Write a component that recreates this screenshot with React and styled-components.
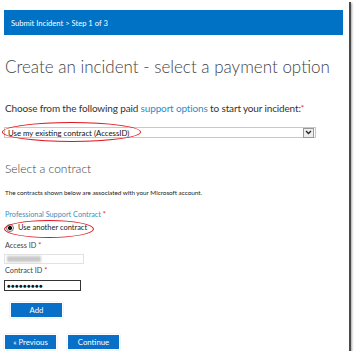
import React from 'react'
import styled, { createGlobalStyle } from 'styled-components'

const GlobalStyle = createGlobalStyle`
  html, body {
    margin: 0;
    padding: 0;
    background: #fff;
  }
  body {
    font-family: Lato, "Liberation Sans", sans-serif;
    color: #333;
  }
`

const Frame = styled.div`
  position: relative;
  width: 349px;
  height: 351px;
  box-sizing: border-box;
  background: #fff;
  box-shadow: 2px 2px 0 #4a4a4a, 3px 3px 2px rgba(0, 0, 0, 0.35);
  padding: 10px 6px 0 4px;
  overflow: hidden;
`

const Banner = styled.div`
  height: 25px;
  background: #0072c6;
  color: #fff;
  font-size: 7.6px;
  display: flex;
  align-items: center;
  padding-left: 7px;
`

const Content = styled.div`
  padding-left: 1px;
`

const Title = styled.h1`
  margin: 22px 0 0;
  font-weight: 300;
  font-size: 17px;
  line-height: 20px;
  color: #444;
  white-space: nowrap;
`

const Lead = styled.p`
  margin: 24px 0 0;
  font-size: 10px;
  letter-spacing: -0.15px;
  line-height: 14px;
  color: #333;
  white-space: nowrap;
`

const Link = styled.span`
  color: #2e8ec9;
`

const Req = styled.span`
  color: #e0262b;
  font-size: ${p => p.$small ? '7.3px' : '8px'};
  vertical-align: ${p => p.$small ? 'baseline' : 'top'};
`

const SelectBox = styled.div`
  margin: 12px 0 0 -1px;
  width: 312px;
  height: 11px;
  box-sizing: border-box;
  border: 1px solid #c8c8c8;
  display: flex;
  align-items: center;
  justify-content: space-between;
  font-size: 7.8px;
  color: #111;
  padding-left: 3px;
`

const Arrow = styled.span`
  width: 9px;
  height: 8px;
  margin-right: 1px;
  border: 1px solid #999;
  background: #eee;
  display: flex;
  align-items: center;
  justify-content: center;
`

const SubTitle = styled.h2`
  margin: 23px 0 0;
  font-weight: 300;
  font-size: 12px;
  line-height: 16px;
  color: #444;
`

const Note = styled.p`
  margin: 11px 0 0;
  font-size: 6.4px;
  letter-spacing: -0.05px;
  line-height: 10px;
  color: #222;
  white-space: nowrap;
`

const FieldLabel = styled.div`
  margin-top: ${p => p.$gap}px;
  font-size: 7.3px;
  line-height: 11px;
  color: ${p => p.$accent ? '#3a8fc0' : '#444'};
`

const RadioRow = styled.label`
  display: flex;
  align-items: center;
  gap: 4px;
  margin-top: 2px;
  font-size: 7.5px;
  line-height: 12px;
  color: #222;
`

const Radio = styled.span`
  width: 6px;
  height: 6px;
  border-radius: 50%;
  border: 1px solid #777;
  background: radial-gradient(circle, #111 0 1.8px, #eee 2.3px);
  margin-left: 1px;
`

const Input = styled.div`
  margin: ${p => p.$top}px 0 0 -1px;
  width: ${p => p.$w}px;
  height: ${p => p.$h}px;
  box-sizing: border-box;
  border: 1px solid ${p => p.$dark ? '#333' : '#e2e2e2'};
  display: flex;
  align-items: center;
  padding-left: 2px;
`

const Blurred = styled.span`
  width: 34px;
  height: 6px;
  background: #c9c9c9;
  filter: blur(1.2px);
`

const Dots = styled.span`
  font-size: 6px;
  letter-spacing: 0.4px;
  color: #111;
  line-height: 1;
`

const Button = styled.button`
  all: unset;
  box-sizing: border-box;
  width: 51px;
  height: 14px;
  background: #0a6fc6;
  color: #fff;
  font-family: Lato, "Liberation Sans", sans-serif;
  font-size: 7.8px;
  text-align: center;
  line-height: 14px;
  box-shadow: 0 0 0 1px #fff, 0 0 1px 1px #9cc4e6;
`

const ButtonRow = styled.div`
  display: flex;
  gap: 12px;
  margin: ${p => p.$top}px 0 0 ${p => p.$left || 0}px;
`

const Ring = styled.span`
  position: absolute;
  left: ${p => p.$x}px;
  top: ${p => p.$y}px;
  width: ${p => p.$w}px;
  height: ${p => p.$h}px;
  border: 1.2px solid #e0141c;
  border-radius: 50%;
  pointer-events: none;
`

export default function App() {
  return (
    <>
      <GlobalStyle />
      <Frame>
        <Banner>Submit Incident &gt; Step 1 of 3</Banner>
        <Content>
          <Title>Create an incident - select a payment option</Title>
          <Lead>
            Choose from the following paid <Link>support options</Link> to start your incident:<Req>*</Req>
          </Lead>
          <SelectBox>
            <span>Use my existing contract (AccessID)</span>
            <Arrow>
              <svg width="7" height="5" viewBox="0 0 7 5">
                <path d="M1 1 L3.5 3.5 L6 1" fill="none" stroke="#222" strokeWidth="1.3" />
              </svg>
            </Arrow>
          </SelectBox>
          <SubTitle>Select a contract</SubTitle>
          <Note>The contracts shown below are associated with your Microsoft account.</Note>
          <FieldLabel $gap={11} $accent>Professional Support Contract <Req $small>*</Req></FieldLabel>
          <RadioRow>
            <Radio />
            Use another contract
          </RadioRow>
          <FieldLabel $gap={6}>Access ID <Req $small>*</Req></FieldLabel>
          <Input $top={3} $w={80} $h={10}>
            <Blurred />
          </Input>
          <FieldLabel $gap={1}>Contract ID <Req $small>*</Req></FieldLabel>
          <Input $top={4} $w={77} $h={11} $dark>
            <Dots>●●●●●●●●●</Dots>
          </Input>
          <ButtonRow $top={12} $left={6}>
            <Button>Add</Button>
          </ButtonRow>
          <ButtonRow $top={18}>
            <Button>« Previous</Button>
            <Button>Continue</Button>
          </ButtonRow>
        </Content>
        <Ring $x={2} $y={122} $w={137} $h={18} />
        <Ring $x={4} $y={220} $w={88} $h={16} />
      </Frame>
    </>
  )
}
